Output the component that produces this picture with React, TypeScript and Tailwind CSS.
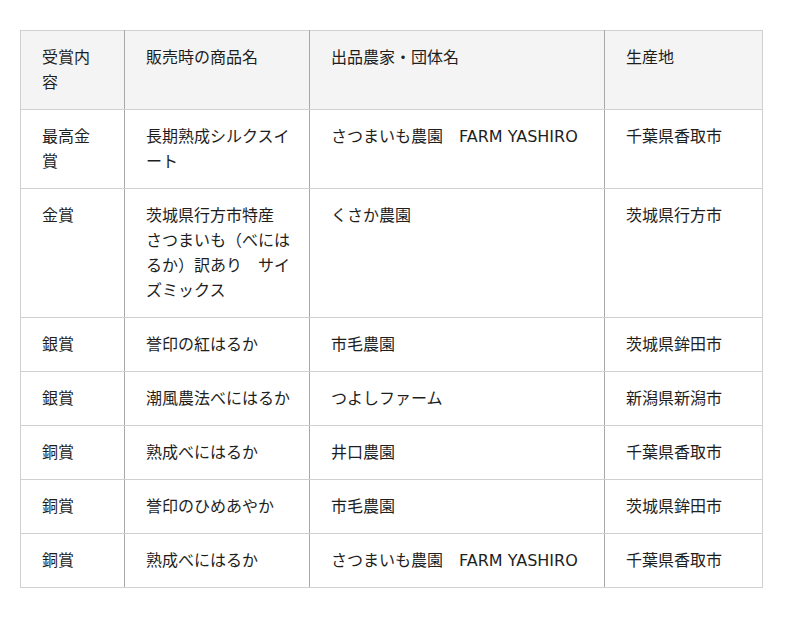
import React from "react";

const rows: [React.ReactNode, React.ReactNode, React.ReactNode, string][] = [
  [<>最高金<br />賞</>, <>長期熟成シルクスイ<br />ート</>, "さつまいも農園　FARM YASHIRO", "千葉県香取市"],
  ["金賞", <>茨城県行方市特産<br />さつまいも（べには<br />るか）訳あり　サイ<br />ズミックス</>, "くさか農園", "茨城県行方市"],
  ["銀賞", "誉印の紅はるか", "市毛農園", "茨城県鉾田市"],
  ["銀賞", "潮風農法べにはるか", "つよしファーム", "新潟県新潟市"],
  ["銅賞", "熟成べにはるか", "井口農園", "千葉県香取市"],
  ["銅賞", "誉印のひめあやか", "市毛農園", "茨城県鉾田市"],
  ["銅賞", "熟成べにはるか", "さつまいも農園　FARM YASHIRO", "千葉県香取市"],
];

const cell = "align-top pt-[14px] pb-[14px] pl-[21px] pr-[10px] border-t border-b border-[#d0d0d0] whitespace-nowrap";
const sep = " border-r border-r-[#a8a8a8]";

export default function App() {
  return (
    <div className="bg-white w-[800px] h-[618px] pt-[30px] pl-[20px]" style={{ fontFamily: '"DejaVu Sans", "Noto Sans CJK JP", sans-serif' }}>
      <table className="border-collapse table-fixed w-[742px] text-[16px] leading-[25px] text-[#1e1e1e] border border-[#d0d0d0]">
        <colgroup>
          <col className="w-[104px]" />
          <col className="w-[185px]" />
          <col className="w-[295px]" />
          <col className="w-[158px]" />
        </colgroup>
        <thead>
          <tr className="bg-[#f4f4f4]">
            <th className={cell + sep + " font-normal text-left"}>受賞内<br />容</th>
            <th className={cell + sep + " font-normal text-left"}>販売時の商品名</th>
            <th className={cell + sep + " font-normal text-left"}>出品農家・団体名</th>
            <th className={cell + " font-normal text-left"}>生産地</th>
          </tr>
        </thead>
        <tbody>
          {rows.map((r, i) => (
            <tr key={i}>
              <td className={cell + sep}>{r[0]}</td>
              <td className={cell + sep}>{r[1]}</td>
              <td className={cell + sep}>{r[2]}</td>
              <td className={cell}>{r[3]}</td>
            </tr>
          ))}
        </tbody>
      </table>
    </div>
  );
}
